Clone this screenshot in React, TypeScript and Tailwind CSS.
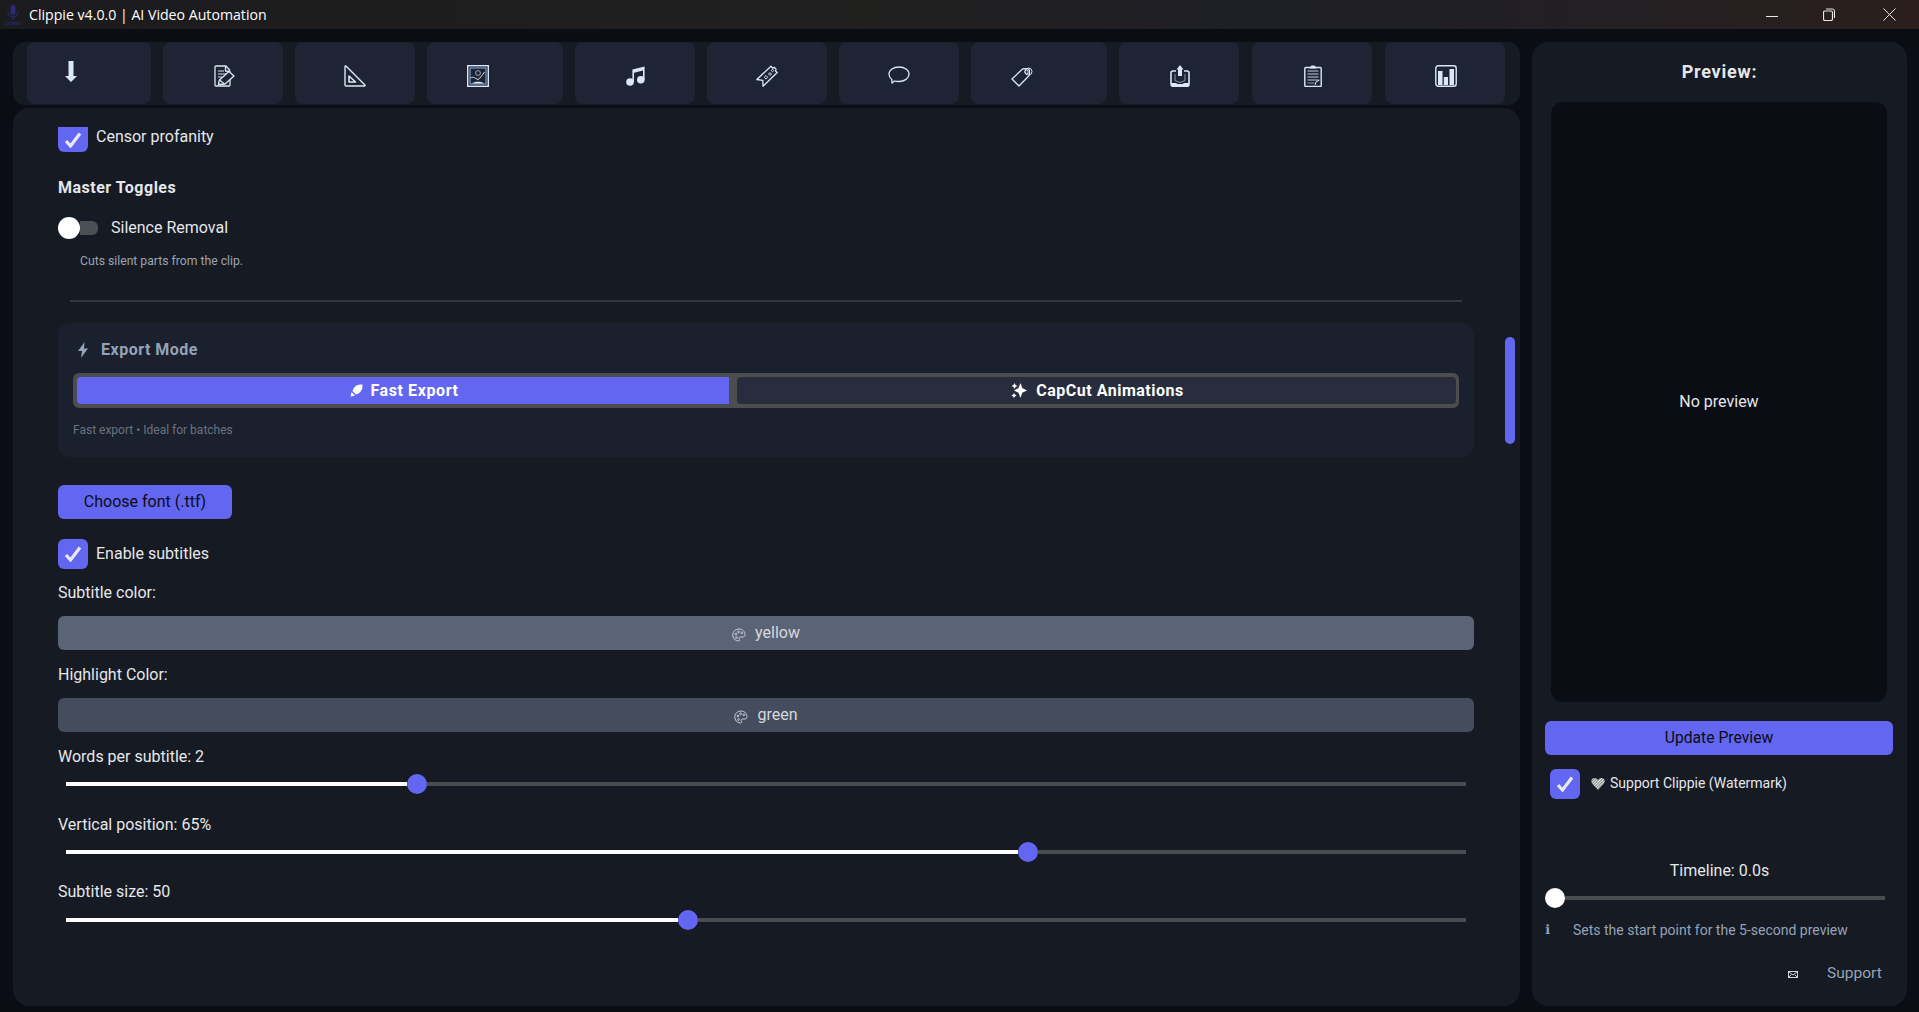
import React from "react";

const IC = "#dbe7f5";

function Arrow() {
  return (
    <svg width="12" height="21" viewBox="0 0 12 21" fill={IC}>
      <path d="M3.500 0h5v15H12l-6 6-6-6h3.500z" />
    </svg>
  );
}
function DocPen() {
  return (
    <svg width="21" height="22" viewBox="0 0 21 22" fill="none" stroke={IC} strokeWidth="1.3" strokeLinejoin="round">
      <path d="M16 14.500V20a1 1 0 0 1-1 1H2a1 1 0 0 1-1-1V2a1 1 0 0 1 1-1h10l4 4.500" />
      <path d="M11.500 1v5l5 .5" />
      <path d="M4 6h6M4 9h8M4 12h4" strokeWidth="1" />
      <path d="M4.500 18.500l1-3.500L15 6.500l5 4.500-9 8-6.500.5z" fill="#1e2433" />
      <path d="M5.500 15l5 4" />
    </svg>
  );
}
function SetSquare() {
  return (
    <svg width="22" height="22" viewBox="0 0 22 22" fill="none" stroke={IC} strokeWidth="1.4" strokeLinejoin="round">
      <path d="M1 1.500V20a1 1 0 0 0 1 1h18.500a.6.6 0 0 0 .4-1L2 1.100a.6.6 0 0 0-1 .4z" />
      <path d="M5 11v6h6.500z" strokeWidth="1.6" />
    </svg>
  );
}
function Picture() {
  return (
    <svg width="22" height="22" viewBox="0 0 22 22" fill="none" stroke={IC} strokeWidth="1.2">
      <rect x="0.700" y="0.700" width="20.600" height="20.600" strokeWidth="1.400" />
      <rect x="3" y="3" width="16" height="16" stroke="#7fa6d8" strokeWidth="1.100" />
      <circle cx="11" cy="8" r="2.400" stroke="#aab4c4" strokeWidth="0.900" />
      <path d="M3.500 13c3-2 5 .8 7.500 1.500 2.500-1.500 4-4 6.500-7.500" strokeWidth="1" />
      <path d="M5 18.500c2-2.500 10-2.500 12 0z" fill={IC} stroke="none" />
    </svg>
  );
}
function Music() {
  return (
    <svg width="20" height="20" viewBox="0 0 20 20" fill={IC}>
      <circle cx="4" cy="16" r="3.800" />
      <circle cx="14.800" cy="13.800" r="3.800" />
      <path d="M6.400 16V3.600L18.600.5v13.300h-1.600V4.600L8 6.800V16z" />
    </svg>
  );
}
function Ticket() {
  return (
    <svg width="22" height="22" viewBox="0 0 22 22" fill="none" stroke={IC} strokeWidth="1.3" strokeLinejoin="round">
      <path d="M.8 14.500L15 1.200l1.500 1.800 2-.5 1.600 1.600-.6 2 1.700 1.400L7 21.300l-.2-6z" />
      <path d="M10 10.500l1.800 1.800-1.800 1.800-1.800-1.800zM14 7.500l1.500 1.500-1.500 1.500-1.500-1.500zM16.500 4.200l1.300 1.300-1.300 1.300-1.300-1.300z" strokeWidth="1" />
    </svg>
  );
}
function Bubble() {
  return (
    <svg width="22" height="18" viewBox="0 0 22 18" fill="none" stroke={IC} strokeWidth="1.3" strokeLinejoin="round">
      <path d="M11 1c5.500 0 10 3 10 7.300 0 4-4.500 7.200-10 7.200-1.500 0-3 0-4.500-.5L4 17l-.2-3.600C2 12 1 10.300 1 8.300 1 4 5.500 1 11 1z" />
    </svg>
  );
}
function Tag() {
  return (
    <svg width="22" height="20" viewBox="0 0 22 20" fill="none" stroke={IC} strokeWidth="1.3" strokeLinejoin="round">
      <path d="M1 12L11 2.500c.6-.6 1.400-.8 2.200-.8l3.500.2c1 .1 1.800 1 1.800 2l-.2 3.600c0 .7-.3 1.300-.8 1.800L8 19z" />
      <circle cx="15.500" cy="5" r="1.800" strokeWidth="1" />
      <circle cx="17.500" cy="4.500" r="3.500" strokeWidth="1" />
    </svg>
  );
}
function Upload() {
  return (
    <svg width="20" height="22" viewBox="0 0 20 22" fill="none">
      <path d="M6 6H3a2 2 0 0 0-2 2v11a2.500 2.500 0 0 0 2.500 2.500h13A2.500 2.500 0 0 0 19 19V8a2 2 0 0 0-2-2h-3" stroke={IC} strokeWidth="1.600" />
      <path d="M1 18h5l1.500 1h5l1.500-1h5v1.500a2 2 0 0 1-2 2H3a2 2 0 0 1-2-2z" fill={IC} />
      <path d="M10 0l3.500 4.500H12V11H8V4.500H6.500z" fill={IC} />
      <path d="M5 9v6.500l5 2 5-2V9" stroke="#8a94a6" strokeWidth="1" />
    </svg>
  );
}
function Clipboard() {
  return (
    <svg width="18" height="22" viewBox="0 0 18 22" fill="none" stroke={IC} strokeWidth="1.2" strokeLinejoin="round">
      <rect x="0.800" y="2.500" width="16.400" height="19" rx="0.800" strokeWidth="1.400" />
      <path d="M6 3l2-2h2l2 2z" fill={IC} />
      <path d="M3.500 6h11M3.500 9h11M3.500 12h11M3.500 15h11" strokeWidth="1" stroke="#c3cedd" />
      <path d="M3.500 18h7" stroke="#8a94a6" strokeWidth="1" />
      <path d="M11 20l1-3 3.500-2" strokeWidth="1" />
    </svg>
  );
}
function Chart() {
  return (
    <svg width="22" height="22" viewBox="0 0 22 22" fill="none">
      <rect x="0.800" y="0.800" width="20.400" height="20.400" rx="2.500" stroke={IC} strokeWidth="1.400" />
      <rect x="3" y="6" width="4.500" height="14" fill={IC} />
      <rect x="8.800" y="12" width="4.200" height="8" fill={IC} />
      <rect x="14.500" y="4" width="4.500" height="16" fill={IC} />
    </svg>
  );
}

function Check({ className }: { className: string }) {
  return (
    <div className={"flex items-center justify-center bg-[#6366f1] shrink-0 " + className}>
      <svg width="18" height="16" viewBox="0 0 18 16" fill="none" stroke="#e8e9f5" strokeWidth="3.200">
        <path d="M2 9l4.500 5L16 1.500" />
      </svg>
    </div>
  );
}

function PaletteIcon() {
  return (
    <svg width="14" height="14" viewBox="0 0 14 14" fill="none" stroke="#c9ced6" strokeWidth="1" className="mt-[3px]">
      <path d="M7 1a6 6 0 1 0-.5 12c1.500 0 1.300-1.300.8-2-.6-1 .2-2 1.400-2h2.200C12.300 9 13 8 13 6.500 13 3.500 10.500 1 7 1z" />
      <circle cx="4" cy="6" r="0.900" />
      <circle cx="6.500" cy="3.800" r="0.900" />
      <circle cx="9.800" cy="4.800" r="0.900" />
      <circle cx="4.500" cy="9.500" r="0.900" />
    </svg>
  );
}

function Slider({ fill }: { fill: string }) {
  return (
    <div className="ml-2 flex h-5 w-[1400px] items-center">
      <div className={"h-1 bg-white " + fill} />
      <div className="h-5 w-5 shrink-0 rounded-full bg-[#6366f1]" />
      <div className="h-1 flex-1 bg-[#4a4d50]" />
    </div>
  );
}

const tileIcons: [React.ReactNode, string][] = [
  [<Arrow />, "w-[124px] pr-[36px] pb-[4px]"],
  [<DocPen />, "w-[120px] pt-[6px] pl-[2px]"],
  [<SetSquare />, "w-[120px] pt-[6px]"],
  [<Picture />, "w-[136px] pt-[6px] pr-[34px]"],
  [<Music />, "w-[120px] pt-[6px] pl-[1px]"],
  [<Ticket />, "w-[120px] pt-[6px]"],
  [<Bubble />, "w-[120px] pt-[4px]"],
  [<Tag />, "w-[136px] pt-[8px] pr-[34px]"],
  [<Upload />, "w-[120px] pt-[6px] pl-[2px]"],
  [<Clipboard />, "w-[120px] pt-[6px] ml-px pl-px"],
  [<Chart />, "w-[120px] pt-[6px] ml-px pl-[2px]"],
];

export default function App() {
  return (
    <div className="flex h-[1012px] w-[1919px] flex-col overflow-hidden bg-[#0a0d14] font-['Roboto',sans-serif] text-[#e5e7eb]">
      {/* title bar */}
      <div className="flex h-[29px] shrink-0 items-center bg-[linear-gradient(90deg,#1b1b1e_0%,#20201f_45%,#1f1f27_65%,#201f27_75%,#2a1f1c_100%)] pl-1 pr-[23px]">
        <svg width="18" height="22" viewBox="0 0 18 22" fill="none">
          <rect x="6.500" y="1" width="5" height="10" rx="2.500" fill="#2f2a78" />
          <path d="M4 7c0 4 2 6 5 6s5-2 5-6M9 13v3" stroke="#2f2a78" strokeWidth="1" />
          <text x="9" y="21" textAnchor="middle" fontSize="4" fontWeight="700" fill="#2b2a70" fontFamily="Roboto">CLIPPIE</text>
        </svg>
        <span className="ml-[7px] flex-1 font-['Open_Sans',sans-serif] text-[14.150px] text-white">Clippie v4.0.0 | AI Video Automation</span>
        <svg width="12" height="12" viewBox="0 0 12 12" stroke="#e8e8e8" fill="none"><path d="M0 7.500h12" /></svg>
        <svg width="12" height="13" viewBox="0 0 12 13" stroke="#e8e8e8" fill="none" className="ml-[45px]">
          <rect x="0.500" y="3" width="9" height="9.500" rx="1.500" strokeWidth="1.200" />
          <path d="M3 1h6.500A2 2 0 0 1 11.500 3v7" />
        </svg>
        <svg width="13" height="13" viewBox="0 0 13 13" stroke="#e8e8e8" fill="none" className="ml-[48px]"><path d="M.5.5l12 12M12.500.5l-12 12" /></svg>
      </div>

      <div className="flex flex-1 gap-3 pl-[13px] pt-[13px] pb-[6px]">
        {/* left column */}
        <div className="flex w-[1507px] shrink-0 flex-col gap-[3px]">
          <div className="flex h-[63px] shrink-0 gap-3 rounded-xl bg-[#161a22] pl-[14px]">
            {tileIcons.map(([icon, cls], i) => (
              <div key={i} className={"flex h-[62px] items-center justify-center rounded-lg bg-[#1e2433] " + cls}>
                {icon}
              </div>
            ))}
          </div>

          <div className="flex flex-1 rounded-2xl bg-[#161a22] pl-[45px] pt-[19px]">
            <div className="flex w-[1416px] shrink-0 flex-col">
              <div className="flex h-[25px] items-start gap-2 text-base">
                <Check className="h-[25px] w-[30px] rounded-b-md" />
                <span className="leading-[20px]">Censor profanity</span>
              </div>

              <div className="mt-[26px] h-5 text-base font-bold leading-5 tracking-[0.5px]">Master Toggles</div>

              <div className="mt-[19px] flex h-[22px] items-center">
                <div className="flex h-[22px] w-10 items-center">
                  <div className="h-[22px] w-[22px] shrink-0 rounded-full bg-white" />
                  <div className="h-[14px] flex-1 rounded-r-md bg-[#4b5055]" />
                </div>
                <span className="ml-[13px] text-base">Silence Removal</span>
              </div>

              <div className="mt-[14px] ml-[22px] h-4 text-[12.200px] leading-4 text-[#9aa4b0]">Cuts silent parts from the clip.</div>

              <div className="mt-[31px] ml-3 h-0.5 w-[1392px] bg-[#33373d]" />

              <div className="mt-[21px] h-[134px] rounded-xl bg-[#1a202e] pl-[15px] pt-[17px]">
                <div className="flex h-5 items-center text-[#94a3b8]">
                  <svg width="12" height="16" viewBox="0 0 12 16" fill="#94a3b8" className="ml-[4px]"><path d="M7.500 0L1 9h4l-1 7L11 6.500H7z" /></svg>
                  <span className="ml-3 text-base font-bold tracking-[0.5px]">Export Mode</span>
                </div>
                <div className="mt-[13px] flex h-[35px] w-[1386px] gap-2 rounded-md border-y-4 border-l-4 border-r-[3px] border-[#4d4d50] bg-[#4d4d50]">
                  <div className="flex w-[652px] items-center justify-center gap-[7px] rounded-l-sm bg-[#6366f1] pl-[3px] text-base font-bold tracking-[0.6px] text-white">
                    <svg width="13" height="13" viewBox="0 0 13 13" fill="#ffffff"><path d="M12.500.5c-4-.5-7 .8-9 4l-1 2.500 3.500 3.500 2.500-1c3-2 4.500-5 4-9zM1.500 8l-1 4.500L5 11.500z" /></svg>
                    <span>Fast Export</span>
                  </div>
                  <div className="flex flex-1 items-center justify-center gap-[9px] rounded-sm bg-[#272d3d] pl-[2px] text-base font-bold tracking-[0.5px] text-white">
                    <svg width="16" height="17" viewBox="0 0 16 17" fill="#ffffff"><path d="M9.500 1l1.800 5 4.700 2.500-4.700 2.200-1.800 5.300-2-5.300L3 8.500l4.500-2.500zM3.500 1l1 2 2 1-2 1-1 2-1-2-2-1 2-1zM3 11l.9 1.600 1.600.9-1.600.9L3 16l-.9-1.600-1.600-.9 1.600-.9z" /></svg>
                    <span>CapCut Animations</span>
                  </div>
                </div>
                <div className="mt-[14px] h-4 text-xs leading-4 text-[#6b7280]">Fast export • Ideal for batches</div>
              </div>

              <div className="mt-[28px] flex h-[34px] w-[174px] items-center justify-center rounded-md bg-[#6366f1] text-base text-[#0a0d14]">Choose font (.ttf)</div>

              <div className="mt-5 flex h-[30px] items-center gap-2 text-base">
                <Check className="h-[30px] w-[30px] rounded-md" />
                <span>Enable subtitles</span>
              </div>

              <div className="mt-[14px] h-5 text-base leading-5">Subtitle color:</div>
              <div className="mt-[13px] flex h-[34px] items-center justify-center gap-[9px] rounded-md bg-[#5b6376] text-base text-[#d6d9df]">
                <PaletteIcon />
                <span>yellow</span>
              </div>

              <div className="mt-[15px] h-5 text-base leading-5">Highlight Color:</div>
              <div className="mt-[13px] flex h-[34px] items-center justify-center gap-[9px] rounded-md bg-[#454c5e] text-base text-[#d6d9df]">
                <PaletteIcon />
                <span>green</span>
              </div>

              <div className="mt-[15px] h-5 text-base leading-5">Words per subtitle: 2</div>
              <div className="mt-[7px]"><Slider fill="w-[341px]" /></div>

              <div className="mt-[21px] h-5 text-base leading-5">Vertical position: 65%</div>
              <div className="mt-[7px]"><Slider fill="w-[952px]" /></div>

              <div className="mt-5 h-5 text-base leading-5">Subtitle size: 50</div>
              <div className="mt-2"><Slider fill="w-[612px]" /></div>
            </div>

            <div className="ml-[31px] mt-[210px] h-[107px] w-[10px] rounded-full bg-[#6366f1]" />
          </div>
        </div>

        {/* right panel */}
        <div className="flex w-[375px] shrink-0 flex-col rounded-2xl bg-[#161a22]">
          <div className="mt-5 h-5 text-center text-[18px] font-bold leading-5 tracking-[0.75px]">Preview:</div>
          <div className="ml-[19px] mt-[20px] flex h-[600px] w-[336px] items-center justify-center rounded-xl bg-[#0a0d14] text-base">No preview</div>

          <div className="ml-[13px] mt-[19px] flex h-[34px] w-[348px] items-center justify-center rounded-md bg-[#6366f1] text-[15.700px] text-[#0a0d14]">Update Preview</div>

          <div className="ml-[18px] mt-[14px] flex h-[30px] items-center">
            <Check className="h-[30px] w-[30px] rounded-md" />
            <svg width="14" height="13" viewBox="0 0 14 13" className="ml-[11px] -mt-0.5">
              <defs>
                <pattern id="hs" width="2" height="2" patternUnits="userSpaceOnUse" patternTransform="rotate(45)">
                  <rect width="1.300" height="2" fill="#efefe3" />
                  <rect x="1.300" width="0.700" height="2" fill="#7a8a9a" />
                </pattern>
              </defs>
              <path d="M7 13L1 6.500C-.5 4.500.5 1 3.500 1 5 1 6.300 1.800 7 3c.7-1.200 2-2 3.500-2 3 0 4 3.500 2.500 5.500z" fill="url(#hs)" />
            </svg>
            <span className="ml-[5px] -mt-0.5 text-sm">Support Clippie (Watermark)</span>
          </div>

          <div className="mt-[62px] h-5 text-center text-base leading-5">Timeline: 0.0s</div>
          <div className="ml-[13px] mt-[7px] flex h-5 w-[340px] items-center">
            <div className="h-5 w-5 shrink-0 rounded-full bg-white" />
            <div className="h-1 flex-1 bg-[#4a4d50]" />
          </div>
          <div className="ml-[13px] mt-3 flex h-5 items-center text-sm text-[#94a3b8]">
            <span className="w-7 font-['DejaVu_Sans',sans-serif] text-[13px] font-bold">ℹ</span>
            <span>Sets the start point for the 5-second preview</span>
          </div>
          <div className="mt-[24px] flex h-5 items-center pl-[256px] text-[15.500px] text-[#94a3b8]">
            <svg width="10" height="7" viewBox="0 0 10 7" fill="none" stroke="#dbe7f5" strokeWidth="0.900">
              <rect x="0.500" y="0.500" width="9" height="6" />
              <path d="M.5.5L5 4l4.500-3.500M.5 6.500l3-3M9.500 6.500l-3-3" />
            </svg>
            <span className="ml-[29px]">Support</span>
          </div>
        </div>
      </div>
    </div>
  );
}
